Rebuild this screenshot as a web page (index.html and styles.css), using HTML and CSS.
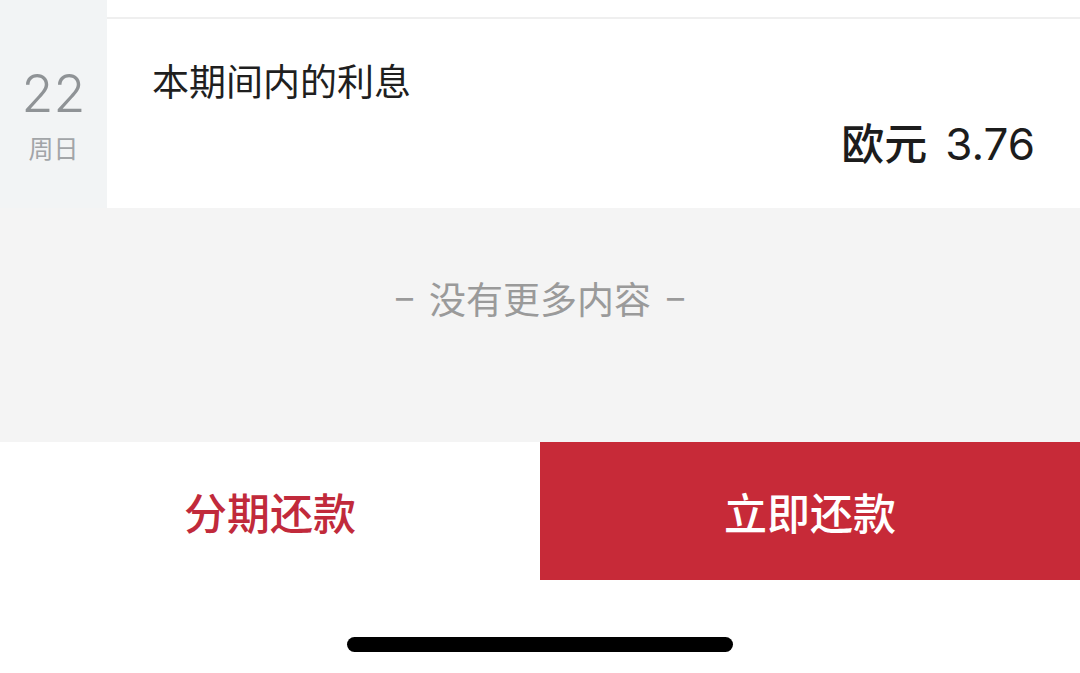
FILE: index.html
```html
<!DOCTYPE html>
<html lang="zh-CN">
<head>
<meta charset="utf-8">
<link rel="stylesheet" href="styles.css">
</head>
<body>
<div class="page">
  <div class="list">
    <div class="datecol">
      <div class="day">22</div>
      <div class="weekday">周日</div>
    </div>
    <div class="main">
      <div class="topstrip"></div>
      <div class="card">
        <div class="title">本期间内的利息</div>
        <div class="amount"><span class="cur">欧元</span><span class="num">3.76</span></div>
      </div>
    </div>
  </div>
  <div class="nomore"><span class="dash">–</span><span class="msg">没有更多内容</span><span class="dash">–</span></div>
  <div class="actions">
    <div class="btn btn-plan">分期还款</div>
    <div class="btn btn-now">立即还款</div>
  </div>
  <div class="homearea"><div class="homebar"></div></div>
</div>
</body>
</html>
```
FILE: styles.css
```css
html, body {
  margin: 0;
  padding: 0;
  background: #ffffff;
}
.page {
  width: 1080px;
  height: 673px;
  overflow: hidden;
  font-family: "Inter", "Noto Sans CJK SC", sans-serif;
  display: flex;
  flex-direction: column;
}
.list {
  display: flex;
  height: 208px;
}
.datecol {
  width: 107px;
  background: #f2f4f5;
  display: flex;
  flex-direction: column;
  align-items: center;
  padding-top: 66px;
  box-sizing: border-box;
}
.day {
  font-size: 52px;
  font-weight: 300;
  color: #8f9396;
  line-height: 56px;
}
.weekday {
  font-family: "Noto Sans CJK SC", sans-serif;
  font-size: 25px;
  color: #a2a5a8;
  line-height: 30px;
  margin-top: 10px;
}
.main {
  flex: 1;
  display: flex;
  flex-direction: column;
}
.topstrip {
  height: 17px;
  background: #ffffff;
  border-bottom: 2px solid #efefef;
}
.card {
  flex: 1;
  background: #ffffff;
  padding: 0 45px 0 45px;
  display: flex;
  flex-direction: column;
}
.title {
  font-family: "Noto Sans CJK SC", sans-serif;
  font-size: 37px;
  color: #1f1f1f;
  line-height: 44px;
  margin-top: 39px;
}
.amount {
  align-self: flex-end;
  display: flex;
  align-items: baseline;
  gap: 18px;
  color: #1c1c1c;
  line-height: 50px;
  margin-top: 14px;
}
.cur {
  font-family: "Noto Sans CJK SC", sans-serif;
  font-size: 43px;
  font-weight: 500;
}
.num {
  font-family: "Inter", sans-serif;
  font-size: 44px;
  font-weight: 400;
}
.nomore {
  height: 234px;
  background: #f4f4f4;
  color: #9a9a9a;
  display: flex;
  justify-content: center;
  align-items: flex-start;
  gap: 16px;
  line-height: 44px;
  padding-top: 68px;
  box-sizing: border-box;
}
.dash {
  font-family: "Inter", sans-serif;
  font-size: 34px;
}
.msg {
  font-family: "Noto Sans CJK SC", sans-serif;
  font-size: 37px;
}
.actions {
  display: grid;
  grid-template-columns: 1fr 1fr;
  height: 138px;
}
.btn {
  display: flex;
  align-items: center;
  justify-content: center;
  font-family: "Noto Sans CJK SC", sans-serif;
  font-size: 43px;
  font-weight: 500;
}
.btn-plan {
  background: #ffffff;
  color: #c12a3b;
}
.btn-now {
  background: #c72a38;
  color: #ffffff;
}
.homearea {
  flex: 1;
  background: #ffffff;
  display: flex;
  justify-content: center;
  padding-top: 57px;
  box-sizing: border-box;
}
.homebar {
  width: 386px;
  height: 15px;
  border-radius: 8px;
  background: #000000;
}
```
